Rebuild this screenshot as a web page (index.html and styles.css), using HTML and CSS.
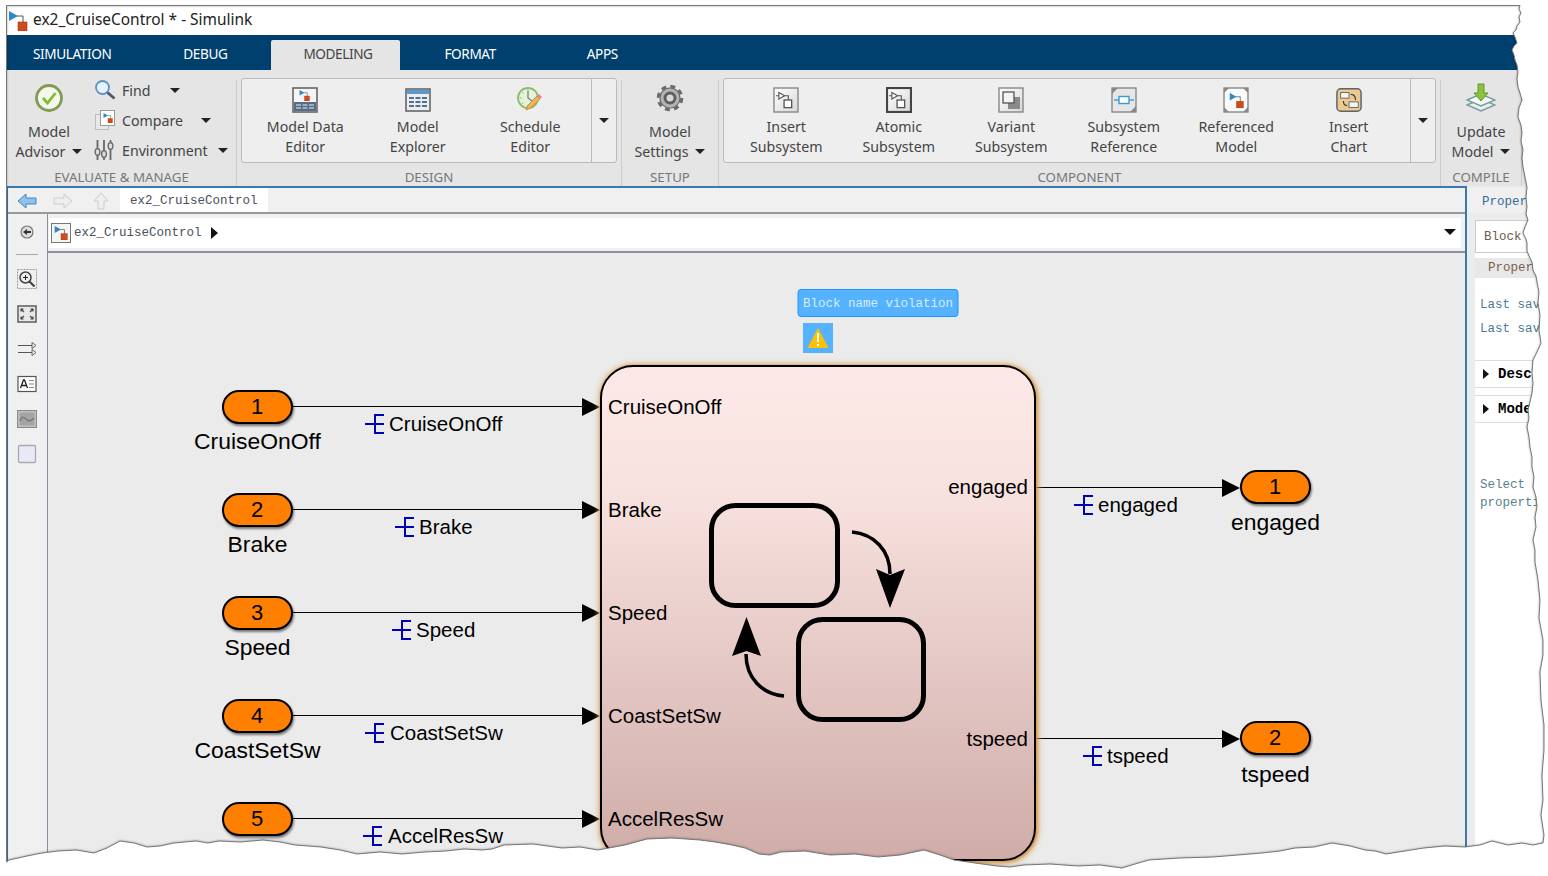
FILE: index.html
```html
<!DOCTYPE html>
<html lang="en">
<head>
    <meta charset="UTF-8">
    <title>ex2_CruiseControl * - Simulink</title>
    <link rel="stylesheet" href="styles.css">
</head>
<body>
    <svg class="defs" width="0" height="0">
        <defs>
            <symbol id="slGlyph" viewBox="0 0 20 20">
                <path d="M9 5h6v8" fill="none" stroke="#555" stroke-width="1"/>
                <path d="M1 0l9 5-9 5z" fill="#2f86c8"/>
                <rect x="10" y="11" width="9" height="9" fill="#d04a1c" stroke="#9c3a18" stroke-width=".6"/>
            </symbol>
            <symbol id="subGlyph" viewBox="0 0 20 20">
                <path d="M0 5h3M9 5h4v4" fill="none" stroke="#555" stroke-width="1.2"/>
                <path d="M3 1.500l6 3.500-6 3.500z" fill="#fff" stroke="#555" stroke-width="1.200"/>
                <rect x="8.500" y="9.500" width="8" height="8" fill="#fff" stroke="#555" stroke-width="1.400"/>
            </symbol>
            <linearGradient id="chartFill" x1="0" y1="0" x2="0" y2="1">
                <stop offset="0" stop-color="#fce9e7"/>
                <stop offset=".25" stop-color="#f8e2df"/>
                <stop offset="1" stop-color="#cfaca8"/>
            </linearGradient>
            <linearGradient id="btnFill" x1="0" y1="0" x2="1" y2="1">
                <stop offset="0" stop-color="#fff"/>
                <stop offset="1" stop-color="#d8d8d8"/>
            </linearGradient>
        </defs>
    </svg>

    <div class="window">
        <div class="titlebar">
            <svg class="title-icon" viewBox="0 0 20 20"><use href="#slGlyph"/></svg>
            <span class="title-text">ex2_CruiseControl * - Simulink</span>
        </div>

        <div class="tabstrip">
            <div class="tab tab-sim">SIMULATION</div>
            <div class="tab tab-debug">DEBUG</div>
            <div class="tab tab-active">MODELING</div>
            <div class="tab tab-format">FORMAT</div>
            <div class="tab tab-apps">APPS</div>
        </div>

        <div class="ribbon">
            <!-- evaluate & manage -->
            <div class="group group-eval">
                <div class="group-body">
                    <div class="big-btn big-advisor">
                        <svg class="big-icon" viewBox="0 0 30 30">
                            <circle cx="15" cy="15" r="12.500" fill="#f4f7ee" stroke="#7f9c52" stroke-width="2.800"/>
                            <path d="M9 15l4.500 5 8-10" fill="none" stroke="#7cc02e" stroke-width="2.800"/>
                        </svg>
                        <div class="btn-line">Model</div>
                        <div class="btn-line">Advisor<i class="caret"></i></div>
                    </div>
                    <div class="tools">
                        <div class="tool">
                            <svg class="tool-icon" viewBox="0 0 22 22">
                                <circle cx="8.500" cy="8.500" r="6.500" fill="#e6f1fa" stroke="#5b93c2" stroke-width="1.800"/>
                                <path d="M13.500 13.500l7 6" stroke="#4a5a6a" stroke-width="2.800"/>
                            </svg>
                            <span>Find</span><i class="caret caret-find"></i>
                        </div>
                        <div class="tool">
                            <svg class="tool-icon" viewBox="0 0 22 22">
                                <rect x="1.500" y="5.500" width="13" height="15" fill="#e8e8e8" stroke="#bbb"/>
                                <rect x="6.500" y="1.500" width="14" height="15" fill="#fff" stroke="#999"/>
                                <use href="#slGlyph" x="9" y="4" width="10" height="10"/>
                            </svg>
                            <span>Compare</span><i class="caret caret-compare"></i>
                        </div>
                        <div class="tool">
                            <svg class="tool-icon" viewBox="0 0 22 22">
                                <path d="M3.500 1v20M10 1v20M16.500 1v20" stroke="#666" stroke-width="1.800"/>
                                <g fill="#ddd" stroke="#666" stroke-width="1.300">
                                    <ellipse cx="3.500" cy="13" rx="2.400" ry="3.400"/>
                                    <ellipse cx="10" cy="15" rx="2.400" ry="3.400"/>
                                    <ellipse cx="16.500" cy="7" rx="2.400" ry="3.400"/>
                                </g>
                            </svg>
                            <span>Environment</span><i class="caret caret-env"></i>
                        </div>
                    </div>
                </div>
                <div class="group-label">EVALUATE &amp; MANAGE</div>
            </div>

            <!-- design -->
            <div class="group group-design">
                <div class="group-body">
                    <div class="panel">
                        <div class="item">
                            <svg class="item-icon" viewBox="0 0 26 26">
                                <rect x="1" y="1" width="24" height="24" fill="#f4f4f4" stroke="#666" stroke-width="1.600"/>
                                <use href="#slGlyph" x="7" y="3" width="11" height="11"/>
                                <rect x="2" y="15" width="22" height="9" fill="#5a6b80"/>
                                <path d="M4 18h5M10.500 18h5M17 18h5M4 21h5M10.500 21h5M17 21h5" stroke="#a8c8e8" stroke-width="1.600"/>
                            </svg>
                            <div class="btn-line">Model Data</div>
                            <div class="btn-line">Editor</div>
                        </div>
                        <div class="item">
                            <svg class="item-icon" viewBox="0 0 26 26">
                                <rect x="1" y="2" width="24" height="22" fill="#e9eef3" stroke="#666" stroke-width="1.600"/>
                                <rect x="2" y="3" width="22" height="4" fill="#5b9ac8"/>
                                <path d="M4 11h5M10.500 11h5M17 11h5M4 15h5M10.500 15h5M17 15h5M4 19h5M10.500 19h5M17 19h5" stroke="#56708a" stroke-width="1.800"/>
                            </svg>
                            <div class="btn-line">Model</div>
                            <div class="btn-line">Explorer</div>
                        </div>
                        <div class="item">
                            <svg class="item-icon" viewBox="0 0 26 26">
                                <circle cx="11" cy="11" r="10" fill="#e6f3dc" stroke="#8dbb6e" stroke-width="1.800"/>
                                <path d="M11 2.500v2M11 17.500v2M2.500 11h2M17.500 11h2M5 5l1.400 1.400M15.600 15.600L17 17M5 17l1.400-1.400" stroke="#8dbb6e"/>
                                <path d="M11 4v7l4 3" fill="none" stroke="#6a7a80" stroke-width="1.200"/>
                                <path d="M9 23l2-5 9-9 3 3-9 9z" fill="#e9b45a" stroke="#b98a3a" stroke-width=".8"/>
                                <path d="M20 9l2-2 3 3-2 2z" fill="#ec7f9a"/>
                            </svg>
                            <div class="btn-line">Schedule</div>
                            <div class="btn-line">Editor</div>
                        </div>
                        <div class="more"><i class="caret"></i></div>
                    </div>
                </div>
                <div class="group-label">DESIGN</div>
            </div>

            <!-- setup -->
            <div class="group group-setup">
                <div class="group-body">
                    <div class="big-btn">
                        <svg class="big-icon" viewBox="0 0 30 30">
                            <circle cx="15" cy="15" r="11.800" fill="none" stroke="#6c6c6c" stroke-width="3" stroke-dasharray="5 4.270"/>
                            <circle cx="15" cy="15" r="10" fill="#b5b5b5" stroke="#666" stroke-width="1.200"/>
                            <circle cx="15" cy="15" r="6.500" fill="#5f5f5f"/>
                            <circle cx="15" cy="15" r="3.500" fill="#d8d8d8"/>
                        </svg>
                        <div class="btn-line">Model</div>
                        <div class="btn-line">Settings<i class="caret"></i></div>
                    </div>
                </div>
                <div class="group-label">SETUP</div>
            </div>

            <!-- component -->
            <div class="group group-component">
                <div class="group-body">
                    <div class="panel panel-component">
                        <div class="item">
                            <svg class="item-icon" viewBox="0 0 26 26">
                                <rect x="1" y="1" width="24" height="24" fill="url(#btnFill)" stroke="#888" stroke-width="1.400"/>
                                <use href="#subGlyph" x="3" y="4" width="19" height="19"/>
                            </svg>
                            <div class="btn-line">Insert</div>
                            <div class="btn-line">Subsystem</div>
                        </div>
                        <div class="item">
                            <svg class="item-icon" viewBox="0 0 26 26">
                                <rect x="1" y="1" width="24" height="24" fill="url(#btnFill)" stroke="#444" stroke-width="2.200"/>
                                <use href="#subGlyph" x="3" y="4" width="19" height="19"/>
                            </svg>
                            <div class="btn-line">Atomic</div>
                            <div class="btn-line">Subsystem</div>
                        </div>
                        <div class="item">
                            <svg class="item-icon" viewBox="0 0 26 26">
                                <rect x="1" y="1" width="24" height="24" fill="url(#btnFill)" stroke="#888" stroke-width="1.400"/>
                                <rect x="10" y="10" width="12" height="12" fill="#8a8a8a"/>
                                <rect x="5" y="5" width="11" height="11" fill="#f4f4f4" stroke="#555" stroke-width="1.300"/>
                            </svg>
                            <div class="btn-line">Variant</div>
                            <div class="btn-line">Subsystem</div>
                        </div>
                        <div class="item">
                            <svg class="item-icon" viewBox="0 0 26 26">
                                <rect x="1" y="1" width="24" height="24" fill="#e6e6e6" stroke="#888" stroke-width="1.400"/>
                                <path d="M1 7l6-6H1zM25 19l-6 6h6z" fill="#888"/>
                                <path d="M3 13h20" stroke="#3a9ad8" stroke-width="1.400"/>
                                <rect x="8" y="9.500" width="10" height="7" fill="#fff" stroke="#3a9ad8" stroke-width="1.400"/>
                            </svg>
                            <div class="btn-line">Subsystem</div>
                            <div class="btn-line">Reference</div>
                        </div>
                        <div class="item">
                            <svg class="item-icon" viewBox="0 0 26 26">
                                <rect x="1" y="1" width="24" height="24" fill="#fafafa" stroke="#888" stroke-width="1.400"/>
                                <path d="M1 6l5-5H1zM25 6l-5-5h5zM1 20l5 5H1zM25 20l-5 5h5z" fill="#888"/>
                                <use href="#slGlyph" x="6" y="6" width="15" height="15"/>
                            </svg>
                            <div class="btn-line">Referenced</div>
                            <div class="btn-line">Model</div>
                        </div>
                        <div class="item">
                            <svg class="item-icon" viewBox="0 0 28 26">
                                <rect x="1" y="1" width="26" height="24" rx="4" fill="#ecc98f" stroke="#5f6468" stroke-width="1.600"/>
                                <rect x="5" y="5" width="9" height="6" fill="#f6f6f0" stroke="#5f6468"/>
                                <rect x="14" y="15" width="10" height="6" fill="#f6f6f0" stroke="#5f6468"/>
                                <path d="M16 7c4 0 5 2 5 6M12 19c-3 0-4-2-4-5" fill="none" stroke="#333" stroke-width="1.200"/>
                            </svg>
                            <div class="btn-line">Insert</div>
                            <div class="btn-line">Chart</div>
                        </div>
                        <div class="more"><i class="caret"></i></div>
                    </div>
                </div>
                <div class="group-label">COMPONENT</div>
            </div>

            <!-- compile -->
            <div class="group group-compile">
                <div class="group-body">
                    <div class="big-btn">
                        <svg class="big-icon" viewBox="0 0 30 30">
                            <path d="M1 22l14-6 14 6-14 6z" fill="#e8eff0" stroke="#7d9a9a" stroke-width="1.400"/>
                            <path d="M1 17l14-6 14 6-14 6z" fill="#f4f8f8" stroke="#7d9a9a" stroke-width="1.400"/>
                            <path d="M12 1h6v9h4l-7 8-7-8h4z" fill="#8ac23a" stroke="#5d9a2a"/>
                        </svg>
                        <div class="btn-line">Update</div>
                        <div class="btn-line">Model<i class="caret"></i></div>
                    </div>
                </div>
                <div class="group-label">COMPILE</div>
            </div>
        </div>

        <div class="workspace">
            <div class="editor">
                <div class="doc-tabs">
                    <svg class="nav-icon" viewBox="0 0 20 16"><path d="M1 8l8-7v4h10v6H9v4z" fill="#8ec4ec" stroke="#3f86c0"/></svg>
                    <svg class="nav-icon nav-fwd" viewBox="0 0 20 16"><path d="M19 8l-8-7v4H1v6h10v4z" fill="#eee" stroke="#ccc"/></svg>
                    <svg class="nav-icon nav-up" viewBox="0 0 16 18"><path d="M8 1l7 8h-4v8H5V9H1z" fill="#eee" stroke="#ccc"/></svg>
                    <div class="doc-tab">ex2_CruiseControl</div>
                </div>
                <div class="editor-body">
                    <div class="palette">
                        <div class="pal-back">
                            <svg class="pal-icon" viewBox="0 0 14 14">
                                <circle cx="7" cy="7" r="6" fill="#ddd" stroke="#777" stroke-width="1.200"/>
                                <path d="M3 7l4-3v2h4v2H7v2z" fill="#333"/>
                            </svg>
                        </div>
                        <div class="pal-sep"></div>
                        <div class="pal-btn">
                            <svg class="pal-icon-lg" viewBox="0 0 20 20">
                                <rect x=".5" y=".5" width="19" height="19" fill="none" stroke="#999" stroke-dasharray="2 1"/>
                                <circle cx="8.500" cy="8.500" r="5.500" fill="#eee" stroke="#444" stroke-width="1.500"/>
                                <path d="M6 8.500h5M8.500 6v5" stroke="#222"/>
                                <path d="M12.500 12.500l5 5" stroke="#444" stroke-width="2.200"/>
                            </svg>
                        </div>
                        <div class="pal-btn">
                            <svg class="pal-icon-lg" viewBox="0 0 20 20">
                                <rect x="1" y="2" width="18" height="16" fill="#e8e8e8" stroke="#666" stroke-width="1.600"/>
                                <path d="M4 7.500V5h2.500M4 5l3 3M16 7.500V5h-2.500M16 5l-3 3M4 12.500V15h2.500M4 15l3-3M16 12.500V15h-2.500M16 15l-3-3" fill="none" stroke="#444" stroke-width="1.100"/>
                            </svg>
                        </div>
                        <div class="pal-btn">
                            <svg class="pal-icon-lg" viewBox="0 0 20 20">
                                <path d="M1 6.500h15M1 13.500h15" stroke="#555" stroke-width="1.200"/>
                                <path d="M15 3.500l4 3-4 3zM15 10.500l4 3-4 3z" fill="#eee" stroke="#666"/>
                            </svg>
                        </div>
                        <div class="pal-btn">
                            <svg class="pal-icon-lg" viewBox="0 0 20 20">
                                <rect x="1" y="2.500" width="18" height="15" fill="#fff" stroke="#555" stroke-width="1.200"/>
                                <path d="M3.500 14l3-8h1l3 8M5 11.500h4" fill="none" stroke="#222" stroke-width="1.300"/>
                                <path d="M12 6.500h5M12 10h5M12 13.500h5" stroke="#888"/>
                            </svg>
                        </div>
                        <div class="pal-btn">
                            <svg class="pal-icon-lg" viewBox="0 0 20 20">
                                <rect x=".5" y="1.500" width="19" height="17" fill="#c0c0c0" stroke="#888"/>
                                <rect x="2.500" y="3.500" width="15" height="13" fill="#a4a4a4"/>
                                <path d="M3 12c2-5 4-4 6-2s4 3 8-1" fill="none" stroke="#777" stroke-width="1.400"/>
                            </svg>
                        </div>
                        <div class="pal-btn">
                            <svg class="pal-icon-lg" viewBox="0 0 20 20">
                                <rect x="1.500" y="1.500" width="17" height="17" rx="1" fill="#e8e8f8" stroke="#aaa" stroke-width="1.300"/>
                            </svg>
                        </div>
                    </div>
                    <div class="main">
                        <div class="crumb-row">
                            <div class="crumb">
                                <svg class="crumb-icon" viewBox="0 0 20 20">
                                    <rect x=".5" y=".5" width="19" height="19" fill="#f4f4f4" stroke="#777"/>
                                    <use href="#slGlyph" x="3" y="3" width="14" height="14"/>
                                </svg>
                                <span class="crumb-text">ex2_CruiseControl</span>
                                <i class="crumb-arrow"></i>
                                <i class="crumb-drop"></i>
                            </div>
                        </div>
                        <div class="canvas">
                            <svg class="diagram" viewBox="48 253 1417 623" width="1417" height="623">
                                <!-- notification -->
                                <rect class="notice" x="798" y="289.500" width="160" height="27" rx="3"/>
                                <text class="notice-text" x="878" y="304">Block name violation</text>
                                <rect class="notice-sq" x="803" y="323" width="30" height="30"/>
                                <path d="M818 328l10.500 20h-21z" fill="#ffc000"/>
                                <path d="M818 333v9M818 344v2" stroke="#fff" stroke-width="2"/>

                                <!-- signal lines -->
                                <g class="wire">
                                    <path d="M293 406.500H584M293 509.500H584M293 612.500H584M293 715.500H584M293 818.500H584M1035 487.500H1224M1035 738.500H1224"/>
                                </g>
                                <g class="head">
                                    <path d="M582 398l18 9-18 9zM582 501l18 9-18 9zM582 604l18 9-18 9zM582 707l18 9-18 9zM582 810l18 9-18 9zM1222 479l18 9-18 9zM1222 730l18 9-18 9z"/>
                                </g>

                                <!-- chart block -->
                                <rect class="chart" x="601" y="366" width="434" height="494" rx="32"/>
                                <text class="lbl" x="608" y="406">CruiseOnOff</text>
                                <text class="lbl" x="608" y="509">Brake</text>
                                <text class="lbl" x="608" y="612">Speed</text>
                                <text class="lbl" x="608" y="715">CoastSetSw</text>
                                <text class="lbl" x="608" y="818">AccelResSw</text>
                                <text class="lbl lbl-end" x="1028" y="486">engaged</text>
                                <text class="lbl lbl-end" x="1028" y="738">tspeed</text>

                                <!-- stateflow glyph -->
                                <rect class="state" x="711.500" y="505.500" width="126" height="100" rx="24"/>
                                <rect class="state" x="798.500" y="619.500" width="125" height="100" rx="24"/>
                                <path class="flow" d="M852 532c22 2 38 18 38 42"/>
                                <path d="M876 569l14 6 15-6-15 39z"/>
                                <path class="flow" d="M784 696c-22-2-38-18-38-42"/>
                                <path d="M732 656l14.500-5 14.500 5-14.500-39z"/>

                                <!-- inports -->
                                <g class="port"><rect x="223" y="391" width="69" height="32" rx="16"/></g>
                                <g class="port"><rect x="223" y="494" width="69" height="32" rx="16"/></g>
                                <g class="port"><rect x="223" y="597" width="69" height="32" rx="16"/></g>
                                <g class="port"><rect x="223" y="700" width="69" height="32" rx="16"/></g>
                                <g class="port"><rect x="223" y="803" width="69" height="32" rx="16"/></g>
                                <text class="num" x="257" y="406.500">1</text>
                                <text class="num" x="257" y="509.500">2</text>
                                <text class="num" x="257" y="612.500">3</text>
                                <text class="num" x="257" y="715.500">4</text>
                                <text class="num" x="257" y="818.500">5</text>
                                <text class="name" x="257.500" y="441">CruiseOnOff</text>
                                <text class="name" x="257.500" y="544">Brake</text>
                                <text class="name" x="257.500" y="647">Speed</text>
                                <text class="name" x="257.500" y="750">CoastSetSw</text>

                                <!-- outports -->
                                <g class="port"><rect x="1241" y="471" width="69" height="32" rx="16"/></g>
                                <g class="port"><rect x="1241" y="722" width="69" height="32" rx="16"/></g>
                                <text class="num" x="1275" y="486.500">1</text>
                                <text class="num" x="1275" y="737.500">2</text>
                                <text class="name" x="1275.500" y="522">engaged</text>
                                <text class="name" x="1275.500" y="774">tspeed</text>

                                <!-- bus signal names -->
                                <g class="bus">
                                    <path d="M365 424h19M384 415h-9v18h9"/>
                                    <path d="M395 527h19M414 518h-9v18h9"/>
                                    <path d="M392 630h19M411 621h-9v18h9"/>
                                    <path d="M365 733h19M384 724h-9v18h9"/>
                                    <path d="M363 836h19M382 827h-9v18h9"/>
                                    <path d="M1074 505h19M1093 496h-9v18h9"/>
                                    <path d="M1083 756h19M1102 747h-9v18h9"/>
                                </g>
                                <text class="lbl" x="389" y="423">CruiseOnOff</text>
                                <text class="lbl" x="419" y="526">Brake</text>
                                <text class="lbl" x="416" y="629">Speed</text>
                                <text class="lbl" x="390" y="732">CoastSetSw</text>
                                <text class="lbl" x="388" y="835">AccelResSw</text>
                                <text class="lbl" x="1098" y="504">engaged</text>
                                <text class="lbl" x="1107" y="755">tspeed</text>
                            </svg>
                        </div>
                    </div>
                </div>
            </div>

            <div class="props">
                <div class="props-head">Property Inspector</div>
                <div class="props-panel">
                    <div class="props-tab">Block</div>
                    <div class="props-sub">Properties</div>
                    <div class="props-info">
                        <div>Last saved by:</div>
                        <div>Last saved on:</div>
                    </div>
                    <div class="props-sec props-sec-first"><i class="sec-arrow"></i>Description</div>
                    <div class="props-sec"><i class="sec-arrow"></i>Model version</div>
                    <div class="props-hint">
                        <div>Select a block to view its</div>
                        <div>properties</div>
                    </div>
                </div>
            </div>
        </div>
    </div>

    <!-- torn screenshot edge, lies over the window -->
    <svg class="tear" viewBox="0 0 1548 876" width="1548" height="876">
        <path class="tear-fill" fill-rule="evenodd" d="M-9 -9H1557V885H-9Z M6.500 5.500 1520 5.500 1519 9 1521 13 1519 17 1520 22 1517 26 1516 30 1513 33 1515 37 1517 43 1514 46 1512 50 1514 55 1515 60 1517 65 1518 72 1517 79 1518 87 1520 93 1522 100 1519 108 1518 117 1521 125 1522 133 1521 141 1523 150 1522 158 1523 167 1525 177 1527 187 1526 197 1527 207 1526 214 1528 220 1525 227 1523 233 1526 239 1527 243 1527 251 1530 258 1532 262 1533 270 1536 276 1537 282 1539 292 1538 303 1540 315 1539 330 1541 343 1537 352 1533 360 1532 373 1533 383 1532 393 1530 402 1528 410 1529 418 1527 427 1529 437 1530 447 1532 457 1532 467 1534 477 1533 487 1536 497 1537 507 1535 517 1536 527 1533 540 1535 550 1535 562 1538 580 1540 600 1539 618 1543 640 1543 655 1540 672 1541 700 1544 725 1544 750 1542 775 1543 800 1541 815 1544 835 1543 843 1533 845 1522 843 1508 845 1492 841 1480 845 1465 847 1445 846 1424 848 1405 851 1386 854 1375 851 1365 850 1350 846 1332 843 1314 847 1295 848 1280 851 1262 853 1238 855 1213 857 1180 858 1149 860 1135 864 1122 868 1100 865 1078 866 1050 864 1024 865 1010 867 997 866 975 863 954 860 940 855 924 850 900 855 878 857 855 854 830 855 805 851 781 852 770 855 759 854 745 848 732 845 715 842 700 840 672 838 647 839 625 845 598 850 580 847 562 848 533 844 504 845 492 849 482 850 464 849 446 851 425 852 402 854 380 852 357 854 340 850 321 847 308 846 295 845 280 842 263 840 240 842 219 841 208 843 196 841 185 842 174 843 160 846 147 847 134 843 120 841 107 848 94 853 76 850 58 851 42 853 27 856 18 858 9 860 6.500 862Z"/>
    </svg>
</body>
</html>
```

FILE: styles.css
```css
html, body {
    margin: 0;
    padding: 0;
    background-color: #fff;
}
body {
    width: 1548px;
    height: 876px;
    position: relative;
    overflow: hidden;
    font-family: "Noto Sans", sans-serif;
    font-size: 14.200px;
    color: #444;
}
.defs {
    display: block;
    height: 0;
}

.window {
    width: 1541px;
    height: 870px;
    margin: 6px 0 0 7px;
    display: flex;
    flex-direction: column;
    overflow: hidden;
    white-space: nowrap;
}

/* title bar */
.titlebar {
    height: 29px;
    display: flex;
    align-items: center;
    flex-shrink: 0;
    color: #222;
    font-size: 15.450px;
}
.title-icon {
    width: 20px;
    height: 20px;
    margin: 0 5px 0 1px;
}
.title-text {
    padding-bottom: 3px;
}

/* tabs */
.tabstrip {
    height: 35px;
    flex-shrink: 0;
    display: flex;
    align-items: flex-end;
    background-color: #00406f;
}
.tab {
    height: 30px;
    line-height: 28px;
    color: #fff;
    font-size: 13.600px;
    letter-spacing: -.4px;
}
.tab-sim {
    margin-left: 26px;
}
.tab-debug {
    margin-left: 72px;
}
.tab-active {
    width: 129px;
    box-sizing: border-box;
    padding-left: 4px;
    margin-left: 44px;
    background-color: #e5e5e5;
    color: #444;
    text-align: center;
    border-radius: 2px 2px 0 0;
}
.tab-format {
    margin-left: 44px;
}
.tab-apps {
    margin-left: 91px;
}

/* ribbon */
.ribbon {
    height: 116px;
    flex-shrink: 0;
    display: flex;
    background-color: #e5e5e5;
}
.group {
    display: flex;
    flex-direction: column;
    box-sizing: border-box;
    border-right: 1px solid #ccc;
    margin-top: 10px;
}
.group-eval {
    width: 230px;
}
.group-design {
    width: 385px;
    padding: 0 4px;
}
.group-setup {
    width: 97px;
}
.group-component {
    width: 722px;
    padding: 0 4px;
}
.group-compile {
    width: 81px;
}
.group-body {
    height: 83px;
    display: flex;
    margin-top: -2px;
}
.group-label {
    margin-top: 7px;
    height: 18px;
    line-height: 18px;
    text-align: center;
    color: #777;
    font-size: 13.300px;
}
.panel {
    flex: 1;
    display: flex;
    box-sizing: border-box;
    height: 85px;
    padding-left: 7px;
    background-color: #eee;
    border: 1px solid #bbb;
    border-radius: 3px;
}
.panel-component {
    padding-left: 6px;
}
.item {
    width: 112.500px;
    text-align: center;
    padding-top: 8px;
    flex-shrink: 0;
}
.item-icon {
    display: block;
    width: 26px;
    height: 26px;
    margin: 0 auto 4px;
}
.btn-line {
    height: 20px;
    line-height: 20px;
}
.more {
    margin-left: auto;
    width: 24px;
    border-left: 1px solid #bbb;
    display: flex;
    align-items: center;
    justify-content: center;
}
.more .caret {
    margin-left: 0;
}
.big-btn {
    flex: 1;
    text-align: center;
    margin-top: -8px;
}
.big-advisor {
    flex: none;
    width: 84px;
}
.big-icon {
    display: block;
    width: 30px;
    height: 30px;
    margin: 13px auto 9px;
}
.caret {
    display: inline-block;
    width: 0;
    height: 0;
    margin-left: 7px;
    vertical-align: 3px;
    border-left: 5px solid transparent;
    border-right: 5px solid transparent;
    border-top: 5px solid #222;
}
.tools {
    margin: -3px 0 0 3px;
}
.tool {
    height: 30px;
    display: flex;
    align-items: center;
}
.tool-icon {
    width: 22px;
    height: 22px;
    margin-right: 6px;
}
.caret-find {
    margin-left: 19px;
}
.caret-compare {
    margin-left: 18px;
}
.caret-env {
    margin-left: 10px;
}

/* editor */
.workspace {
    flex: 1;
    display: flex;
    min-height: 0;
}
.editor {
    width: 1460px;
    flex-shrink: 0;
    box-sizing: border-box;
    display: flex;
    flex-direction: column;
    border: 2px solid #3a78ae;
    border-width: 2px 2px 0 1px;
    font-family: "Liberation Mono", monospace;
    font-size: 12.500px;
}
.doc-tabs {
    height: 26px;
    box-sizing: border-box;
    flex-shrink: 0;
    display: flex;
    align-items: center;
    background-color: #f0f0f0;
    border-bottom: 2px solid #999;
}
.nav-icon {
    width: 20px;
    height: 16px;
    margin: 2px 0 0 9px;
}
.nav-fwd {
    margin-left: 16px;
}
.nav-up {
    width: 16px;
    height: 18px;
    margin-left: 20px;
}
.doc-tab {
    height: 24px;
    line-height: 26px;
    margin-left: 11px;
    padding: 0 10px;
    background-color: #fff;
    color: #4a5058;
}
.editor-body {
    flex: 1;
    display: flex;
    min-height: 0;
}
.palette {
    width: 40px;
    flex-shrink: 0;
    box-sizing: border-box;
    padding-right: 1px;
    background-color: #f0f0f0;
    border-right: 1px solid #8a90a0;
}
.pal-back {
    height: 35px;
    display: flex;
    align-items: center;
    justify-content: center;
}
.pal-icon {
    width: 14px;
    height: 14px;
}
.pal-sep {
    height: 1px;
    margin: 5px 8px 6px;
    background-color: #aaa;
}
.pal-btn {
    height: 35px;
    display: flex;
    align-items: center;
    justify-content: center;
}
.pal-icon-lg {
    width: 20px;
    height: 20px;
}
.main {
    flex: 1;
    display: flex;
    flex-direction: column;
    min-width: 0;
}
.crumb-row {
    height: 39px;
    box-sizing: border-box;
    flex-shrink: 0;
    padding: 4px 4px 4px 1px;
    background-color: #f0f0f0;
    border-bottom: 2px solid #8a90a0;
}
.crumb {
    height: 30px;
    display: flex;
    align-items: center;
    background-color: #fff;
    color: #4a5058;
}
.crumb-icon {
    width: 20px;
    height: 20px;
    margin: 0 3px 0 2px;
}
.crumb-arrow {
    width: 0;
    height: 0;
    margin-left: 9px;
    border-top: 6px solid transparent;
    border-bottom: 6px solid transparent;
    border-left: 7px solid #111;
}
.crumb-drop {
    width: 0;
    height: 0;
    margin: 0 5px 2px auto;
    border-left: 6px solid transparent;
    border-right: 6px solid transparent;
    border-top: 6px solid #111;
}
.canvas {
    flex: 1;
    background-color: #ebebeb;
    overflow: hidden;
}
.diagram {
    display: block;
}

/* diagram */
.wire path {
    fill: none;
    stroke: #000;
    stroke-width: 1.200;
}
.chart {
    fill: url(#chartFill);
    stroke: #000;
    stroke-width: 2;
    filter: drop-shadow(1px 1px 2px #c98530) drop-shadow(0 0 3px #e0b070);
}
.state {
    fill: none;
    stroke: #000;
    stroke-width: 5;
}
.flow {
    fill: none;
    stroke: #000;
    stroke-width: 3.500;
}
.port rect {
    fill: #ff8000;
    stroke: #000;
    stroke-width: 2;
    filter: drop-shadow(1px 2px 1px rgba(0, 0, 0, .5));
}
.lbl, .num, .name {
    font-family: "Liberation Sans", Arial, sans-serif;
    fill: #000;
    dominant-baseline: central;
}
.lbl {
    font-size: 20.500px;
}
.lbl-end {
    text-anchor: end;
}
.num {
    font-size: 22px;
    text-anchor: middle;
}
.name {
    font-size: 22.900px;
    text-anchor: middle;
}
.bus path {
    fill: none;
    stroke: #0000b4;
    stroke-width: 2;
}
.notice {
    fill: #55b2ff;
    stroke: #1e96ff;
}
.notice-sq {
    fill: #55b2ff;
}
.notice-text {
    font-family: "Liberation Mono", monospace;
    font-size: 12.500px;
    fill: #d6ecff;
    text-anchor: middle;
    dominant-baseline: central;
}

/* property inspector */
.props {
    flex: 1;
    min-width: 0;
    overflow: hidden;
    padding-top: 2px;
    background-color: #ececec;
    font-family: "Liberation Mono", monospace;
    font-size: 12.500px;
}
.props-head {
    height: 25px;
    line-height: 28px;
    padding-left: 15px;
    background-color: #f0f0f0;
    color: #3a6a9a;
}
.props-panel {
    margin-left: 8px;
    height: 100%;
    background-color: #fff;
}
.props-tab {
    height: 33px;
    line-height: 33px;
    margin-top: 7px;
    padding-left: 8px;
    box-sizing: border-box;
    border: 1px solid #ccc;
    border-right: 0;
    color: #6a5a50;
}
.props-sub {
    height: 20px;
    line-height: 20px;
    margin-top: 5px;
    padding-left: 13px;
    background-color: #e8e8e8;
    color: #7a6048;
}
.props-info {
    margin-top: 15px;
    padding-left: 5px;
    line-height: 24px;
    color: #4a7a9a;
}
.props-sec {
    height: 26px;
    line-height: 26px;
    margin-top: 7px;
    padding-left: 8px;
    border-top: 1px solid #ddd;
    border-bottom: 1px solid #ddd;
    display: flex;
    align-items: center;
    color: #000;
    font-weight: bold;
    font-size: 14px;
}
.props-sec-first {
    margin-top: 19px;
}
.sec-arrow {
    width: 0;
    height: 0;
    margin-right: 9px;
    border-top: 5px solid transparent;
    border-bottom: 5px solid transparent;
    border-left: 6px solid #111;
}
.props-hint {
    margin-top: 53px;
    padding-left: 5px;
    line-height: 18px;
    color: #5a7f90;
}

/* torn edge */
.tear {
    position: absolute;
    left: 0;
    top: 0;
}
.tear-fill {
    fill: #fff;
    stroke: #777;
    stroke-width: 1;
    filter: drop-shadow(0 0 1px rgba(0, 0, 0, .35));
}
```
